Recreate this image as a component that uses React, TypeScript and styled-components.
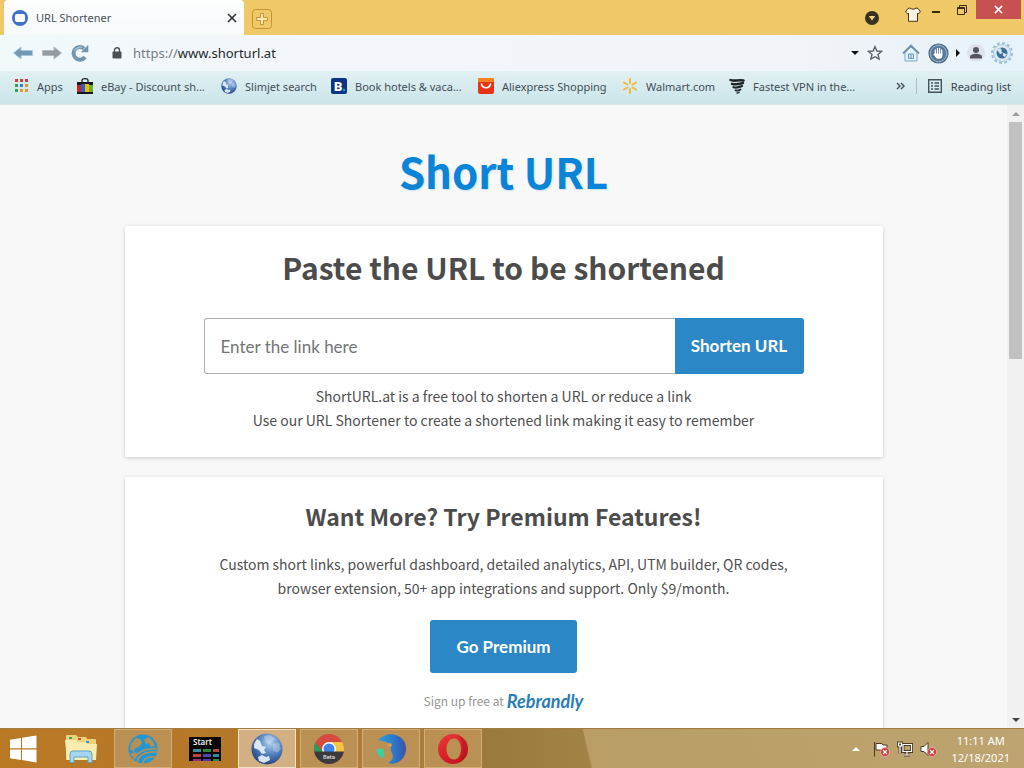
import React from "react";
import styled, { createGlobalStyle } from "styled-components";

const uiFont = '"Noto Sans", "Open Sans", sans-serif';
const bodyFont = '"Noto Sans CJK SC", "Open Sans", sans-serif';
const buttonFont = 'Lato, "Open Sans", sans-serif';

const GlobalStyle = createGlobalStyle`
  * { box-sizing: border-box; }
  html, body, #root { height: 100%; }
  body { margin: 0; overflow: hidden; font-family: ${uiFont}; font-size: 11px; color: #3c4650; }
  button { border: 0; padding: 0; background: none; font: inherit; color: inherit; cursor: pointer; }
  svg { display: block; flex: none; }
  h1, h2, p { margin: 0; }
`;

const Desktop = styled.div`
  display: flex;
  flex-direction: column;
  height: 100vh;
`;

/* ---------- browser chrome ---------- */

const TabStrip = styled.header`
  display: flex;
  flex: none;
  height: 35px;
  padding-left: 4px;
  background: #efc867;
`;

const Tab = styled.div`
  display: flex;
  align-items: center;
  gap: 8px;
  width: 240px;
  padding: 0 6px 0 8px;
  background: linear-gradient(#fdfefe, #f6fafb);
  border-radius: 4px 4px 0 0;
`;

const TabTitle = styled.span`
  flex: 1;
  color: #4b5055;
`;

const IconButton = styled.button`
  display: flex;
  align-items: center;
  justify-content: center;
  flex: none;
`;

const TabClose = styled(IconButton)`
  width: 12px;
  height: 16px;
`;

const NewTabButton = styled(IconButton)`
  width: 20px;
  height: 20px;
  margin: 9px 0 0 8px;
`;

const WindowControls = styled.div`
  display: flex;
  align-items: flex-start;
  margin-left: auto;
`;

const WindowButton = styled(IconButton)<{ $width: number; $height: number }>`
  width: ${(p) => p.$width}px;
  height: ${(p) => p.$height}px;
`;

const CloseWindow = styled(WindowButton)`
  background: #c75050;
  margin-right: 3px;
`;

const Toolbar = styled.div`
  display: flex;
  align-items: center;
  flex: none;
  height: 36px;
  padding: 0 10px 0 13px;
  background: linear-gradient(90deg, #f1f9fb, #f3f6fa 30%, #f0f3f7 80%, #e6f3fa);
`;

const NavButtons = styled.nav`
  display: flex;
  align-items: center;
  gap: 9px;
  margin-right: 23px;
`;

const AddressField = styled.label`
  display: flex;
  align-items: center;
  flex: 1;
  font-size: 13px;
  color: #777b80;
`;

const Scheme = styled.span`
  margin-left: 11px;
`;

const AddressInput = styled.input`
  flex: 1;
  min-width: 0;
  padding: 0;
  border: 0;
  outline: 0;
  background: transparent;
  font: inherit;
  color: #25282c;
`;

const ToolbarActions = styled.div`
  display: flex;
  align-items: center;
  gap: 8px;
`;

const HomeButton = styled(IconButton)`
  margin-left: 11px;
`;

const Extensions = styled.div`
  display: flex;
  align-items: center;
  gap: 5px;
`;

const BookmarkBar = styled.nav`
  display: flex;
  align-items: center;
  flex: none;
  height: 34px;
  padding: 0 13px 3px 13px;
  background: linear-gradient(#e2f0f3, #c9e5e9);
  border-bottom: 1px solid #dfe6e7;
`;

const BookmarkLink = styled.a<{ $width: number }>`
  display: flex;
  align-items: center;
  gap: 8px;
  flex: none;
  width: ${(p) => p.$width}px;
  color: #434d56;
  text-decoration: none;
  white-space: nowrap;
`;

const BookmarkEnd = styled.div`
  display: flex;
  align-items: center;
  gap: 11px;
  margin-left: auto;
`;

const Divider = styled.span`
  width: 1px;
  height: 16px;
  background: #a9bcc2;
`;

const ReadingList = styled.button`
  display: flex;
  align-items: center;
  gap: 9px;
  color: #38424b;
`;

/* ---------- page ---------- */

const Viewport = styled.div`
  display: flex;
  flex: 1;
  min-height: 0;
`;

const Page = styled.main`
  display: flex;
  flex-direction: column;
  align-items: center;
  flex: 1;
  overflow: hidden;
  padding: 31px 24px 0;
  background: #f8f8f8;
  font-family: ${bodyFont};
  font-size: 14px;
  line-height: 24px;
  color: #505050;
  text-align: center;
`;

const SiteTitle = styled.h1`
  font-size: 42px;
  line-height: 70px;
  color: #0a84d6;
  text-shadow: 1px 1px 2px #c9dfee;
`;

const Card = styled.section`
  display: flex;
  flex-direction: column;
  align-items: center;
  flex: none;
  width: 100%;
  max-width: 758px;
  margin-top: 20px;
  padding: 16px 24px 25px;
  background: #fff;
  border-radius: 2px;
  box-shadow: 0 1px 4px #cccccc;
`;

const CardTitle = styled.h2<{ $size: number; $line: number }>`
  font-size: ${(p) => p.$size}px;
  line-height: ${(p) => p.$line}px;
  color: #4c4c4c;
`;

const ShortenForm = styled.form`
  display: flex;
  width: 100%;
  max-width: 600px;
  height: 56px;
  margin: 26px 0 10px;
`;

const LinkInput = styled.input`
  flex: 1;
  min-width: 0;
  padding: 0 16px;
  border: 1px solid #b0b0b0;
  border-right: 0;
  border-radius: 3px 0 0 3px;
  outline: 0;
  font-family: ${buttonFont};
  font-size: 17px;
  &::placeholder { color: #757575; }
`;

const PrimaryButton = styled.button`
  background: #2b87c5;
  color: #fff;
  font-family: ${buttonFont};
  font-size: 17px;
  font-weight: 700;
`;

const ShortenButton = styled(PrimaryButton)`
  width: 129px;
  border-radius: 0 3px 3px 0;
`;

const PremiumButton = styled(PrimaryButton)`
  width: 147px;
  height: 53px;
  margin: 20px 0 16px;
  border-radius: 3px;
`;

const Pitch = styled.p`
  max-width: 600px;
  margin-top: 13px;
`;

const SignUp = styled.p`
  display: flex;
  align-items: center;
  gap: 3px;
  font-size: 12px;
  color: #959595;
`;

const Brand = styled.a`
  color: #2a7db5;
  font-family: ${buttonFont};
  font-size: 18px;
  font-style: italic;
  font-weight: 700;
  text-decoration: none;
`;

const ScrollTrack = styled.div`
  display: flex;
  flex-direction: column;
  align-items: center;
  flex: none;
  width: 17px;
  background: #f1f1f1;
`;

const ScrollArrow = styled(IconButton)`
  width: 17px;
  height: 17px;
`;

const ScrollThumb = styled.div`
  width: 13px;
  height: 38%;
  margin-bottom: auto;
  background: #c1c1c1;
`;

/* ---------- taskbar ---------- */

const Taskbar = styled.footer`
  display: flex;
  align-items: stretch;
  flex: none;
  height: 40px;
  border-top: 1px solid #a07c43;
  background:
    linear-gradient(77deg, transparent 9px, #b99d65 10px, #bda470) 100% 0 / calc(100% - 582px) 100% no-repeat,
    linear-gradient(90deg, #b97823 0, #b5782a 240px, #ad7f3f 400px, #a87432 475px, #9a7a3c 480px, #a08345 590px);
`;

const TaskButton = styled.button<{ $state?: "open" | "active" }>`
  display: flex;
  align-items: center;
  justify-content: center;
  width: 58px;
  margin: 0 2px;
  border: 1px solid ${(p) => (p.$state === "active" ? "#f2e3c6" : p.$state ? "#d3ad74" : "transparent")};
  background: ${(p) => (p.$state === "active" ? "#d2b083" : p.$state ? "#bb9054" : "transparent")};
`;

const StartButton = styled(TaskButton)`
  width: 46px;
  margin: 0 4px 0 0;
`;

const Tray = styled.div`
  display: flex;
  align-items: center;
  gap: 7px;
  margin-left: auto;
  padding-right: 14px;
`;

const TrayToggle = styled(IconButton)`
  margin-right: 6px;
`;

const Clock = styled.time`
  display: block;
  margin-left: 7px;
  line-height: 17px;
  color: #fff;
  text-align: center;
`;

/* ---------- icons ---------- */

const Favicon = () => (
  <svg width="16" height="16" viewBox="0 0 16 16">
    <circle cx="8" cy="8" r="8" fill="#4272c8" />
    <rect x="3" y="4" width="10" height="8" rx="2" fill="#fff" />
  </svg>
);

const Cross = ({ color, size = 10 }: { color: string; size?: number }) => (
  <svg width={size} height={size} viewBox="0 0 10 10" stroke={color} strokeWidth="1.7">
    <path d="M1 1l8 8M9 1L1 9" />
  </svg>
);

const PlusBox = () => (
  <svg width="20" height="20" viewBox="0 0 20 20" fill="none" stroke="#c69034">
    <rect x=".5" y=".5" width="19" height="19" rx="3" />
    <path d="M8.500 4.500h3v4h4v3h-4v4h-3v-4h-4v-3h4z" fill="#fbe9b8" />
  </svg>
);

const MenuDot = () => (
  <svg width="14" height="14" viewBox="0 0 14 14">
    <circle cx="7" cy="7" r="7" fill="#39301d" />
    <path d="M3.800 5h6.400L7 9.500z" fill="#f5d78c" />
  </svg>
);

const Shirt = () => (
  <svg width="16" height="15" viewBox="0 0 16 15">
    <path d="M5 1c1 1.500 5 1.500 6 0l2 .4L15.500 5l-2.300 1.800L12.500 6v8.300h-9V6l-.7.8L.5 5 3 1.400z" fill="#fff3e4" stroke="#4b3515" />
  </svg>
);

const Minimize = () => (
  <svg width="8" height="2" viewBox="0 0 8 2">
    <path d="M0 1h8" stroke="#3a2a0c" strokeWidth="2" />
  </svg>
);

const Restore = () => (
  <svg width="10" height="10" viewBox="0 0 10 10" fill="none" stroke="#3a2a0c">
    <path d="M2.500 2V.5h7v7H8" />
    <path d="M.5 2.500h7v7h-7zM0 3.500h8" />
  </svg>
);

const Arrow = ({ forward = false }: { forward?: boolean }) => (
  <svg width="20" height="14" viewBox="0 0 20 14">
    <path
      d={forward ? "M19.500 7L12 1v3.500H.6v5H12V13z" : "M.5 7L8 1v3.500h11.400v5H8V13z"}
      fill={forward ? "#929ca1" : "#7298b4"}
      stroke={forward ? "#b3babd" : "#a9c6d9"}
    />
  </svg>
);

const Reload = () => (
  <svg width="18" height="18" viewBox="0 0 18 18" fill="none">
    <path d="M14 13A6.300 6.300 0 1 1 13 4.600" stroke="#7595ad" strokeWidth="4" />
    <path d="M17.300.8v7.400H9.800z" fill="#7595ad" />
    <path d="M3.500 7A6 6 0 0 1 11 3.600" stroke="#a7c0d2" strokeWidth="1.500" />
  </svg>
);

const Lock = () => (
  <svg width="10" height="12" viewBox="0 0 10 12">
    <path d="M2.500 5V3.300a2.500 2.500 0 0 1 5 0V5" fill="none" stroke="#4d4f52" strokeWidth="1.400" />
    <rect x=".5" y="4.500" width="9" height="7" rx="1" fill="#4d4f52" />
  </svg>
);

const Triangle = ({ dir, color = "#111" }: { dir: "up" | "down" | "right"; color?: string }) => (
  <svg width="8" height="8" viewBox="0 0 8 8" fill={color}>
    <path d={dir === "up" ? "M4 2l4 4H0z" : dir === "down" ? "M0 2h8L4 6z" : "M2 0l4 4-4 4z"} />
  </svg>
);

const Star = () => (
  <svg width="16" height="16" viewBox="0 0 16 16" fill="none" stroke="#5b6067" strokeWidth="1.400">
    <path d="M8 1.700l1.900 4.300 4.600.4-3.500 3.100 1.100 4.600L8 11.700l-4.100 2.400L5 9.500 1.500 6.400l4.600-.4z" />
  </svg>
);

const Home = () => (
  <svg width="18" height="18" viewBox="0 0 18 18">
    <path d="M3 8.500L9 3l6 5.500V17H3z" fill="#e6f2fa" stroke="#7ba7c8" />
    <path d="M1 9.500l8-8 8 8" fill="none" stroke="#6f8fa8" strokeWidth="1.800" />
    <path d="M6.500 10h5v4.500h-5zM9 10v4.500" fill="#d3e3f0" stroke="#6c98be" />
  </svg>
);

const HandStop = () => (
  <svg width="21" height="21" viewBox="0 0 21 21">
    <circle cx="10.500" cy="10.500" r="9.500" fill="#58789a" stroke="#4c6a88" strokeWidth="1.200" />
    <circle cx="10.500" cy="10.500" r="8.200" fill="none" stroke="#a4bad0" />
    <path d="M7.300 7v4.500M9.500 5.500v6M11.600 5.500v6M13.700 7v5" stroke="#fff" strokeWidth="1.300" strokeLinecap="round" />
    <path d="M6.700 10.500h7.600V13c0 1.700-1.300 2.800-3 2.800H10c-1.300 0-2-.6-2.700-1.800l-2-2.800.9-.5z" fill="#fff" />
  </svg>
);

const Person = () => (
  <svg width="18" height="18" viewBox="0 0 18 18">
    <circle cx="9" cy="9" r="9" fill="#dfe2ec" />
    <circle cx="9" cy="6" r="3" fill="#53545f" />
    <path d="M3 14.500V13c0-2 3-3.200 6-3.200s6 1.200 6 3.200v1.500z" fill="#53545f" />
  </svg>
);

const GearGlobe = () => (
  <svg width="24" height="24" viewBox="0 0 24 24">
    <circle cx="12" cy="12" r="10" fill="#edf5fa" stroke="#9fbfd5" strokeWidth="2" strokeDasharray="3 2.200" />
    <circle cx="12" cy="12" r="8.500" fill="#dceaf4" stroke="#a7c5da" />
    <circle cx="12" cy="12" r="5.500" fill="#3f6d99" />
    <path d="M7 9l3-2 2 2-1 1 2 2-3 1zM13 12l4 1-2 3-2-1z" fill="#d4e6f2" />
  </svg>
);

const gridColors = ["#cf3f3f", "#cf3f3f", "#cf3f3f", "#3c9b55", "#4079c8", "#d99a2e", "#3c9b55", "#d99a2e", "#d99a2e"];

const AppsGrid = () => (
  <svg width="16" height="16" viewBox="0 0 16 16">
    {gridColors.map((fill, i) => (
      <rect key={i} x={2 + (i % 3) * 5} y={1 + Math.floor(i / 3) * 5} width="3" height="3" fill={fill} />
    ))}
  </svg>
);

const EbayBag = () => (
  <svg width="16" height="16" viewBox="0 0 16 16">
    <path d="M5 5V2.500C5 0 11 0 11 2.500V5" fill="none" stroke="#222" strokeWidth="1.300" />
    <path d="M0 4h16v3H0z" fill="#15181c" />
    <path d="M0 7h4v7H0z" fill="#d0202b" />
    <path d="M4 6h4v8H4z" fill="#2464c4" />
    <path d="M8 6h4v8H8z" fill="#f1b90c" />
    <path d="M12 7h4v7h-4z" fill="#6fae21" />
    <path d="M0 14h16v2H0z" fill="#15181c" />
  </svg>
);

const Globe = ({ size }: { size: number }) => (
  <svg width={size} height={size} viewBox="0 0 32 32">
    <defs>
      <radialGradient id="sea" cx=".6" cy=".3" r=".75">
        <stop offset="0" stopColor="#b4d0ee" />
        <stop offset=".5" stopColor="#5583bd" />
        <stop offset="1" stopColor="#1f3f78" />
      </radialGradient>
    </defs>
    <circle cx="16" cy="16" r="15.500" fill="url(#sea)" />
    <path d="M3 11l3-5 3 2 2 5 4 1-2 3 2 3-4 1-3-4-5-2zM7 24l4-2 4 2 3-1 1 4-6 3-5-2z" fill="#e9f3fc" opacity=".9" />
    <path d="M13 3l6-1 6 4-4 2-3 4-4-3zM22 11l6-1 2 6-4 4-4-3z" fill="#d7e7f7" opacity=".35" />
  </svg>
);

const BookingIcon = () => (
  <svg width="16" height="16" viewBox="0 0 16 16">
    <rect width="16" height="16" rx="2" fill="#0b3580" />
    <text x="3" y="13" fill="#fff" fontFamily="Roboto, sans-serif" fontWeight="900" fontSize="13">B</text>
    <circle cx="13" cy="12" r="1.200" fill="#20a0e4" />
  </svg>
);

const AliIcon = () => (
  <svg width="16" height="16" viewBox="0 0 16 16">
    <rect width="16" height="16" rx="2" fill="#e43316" />
    <path d="M0 4V2a2 2 0 0 1 2-2h12a2 2 0 0 1 2 2v2z" fill="#f5821f" />
    <path d="M3.500 6c1 5 8 5 9 0" fill="none" stroke="#fff" strokeWidth="1.600" strokeLinecap="round" />
  </svg>
);

const WalmartIcon = () => (
  <svg width="16" height="16" viewBox="0 0 16 16" stroke="#f2b83a" strokeWidth="2" strokeLinecap="round">
    <path d="M8 1v4M8 11v4M2 4.500l3.500 2M10.500 9.500l3.500 2M2 11.500l3.500-2M10.500 6.500l3.500-2" />
  </svg>
);

const VpnIcon = () => (
  <svg width="16" height="16" viewBox="0 0 16 16" fill="none" stroke="#20262a" strokeLinecap="round">
    <path d="M1.500 2c3 1.800 8-.6 13 .5" strokeWidth="2.600" />
    <path d="M3 5.800c4 1.400 8 0 11-.8" strokeWidth="2.400" />
    <path d="M4.500 9.200c3 1 6 0 8.500-1.200" strokeWidth="2.200" />
    <path d="M6.500 12.400c2 .5 3.500 0 5-1" strokeWidth="1.800" />
    <path d="M8 15c1 0 1.500-.3 2.200-.8" strokeWidth="1.300" />
  </svg>
);

const DoubleChevron = () => (
  <svg width="9" height="8" viewBox="0 0 9 8" fill="none" stroke="#3f4a52" strokeWidth="1.400">
    <path d="M1 1l3 3-3 3M5 1l3 3-3 3" />
  </svg>
);

const ListIcon = () => (
  <svg width="14" height="14" viewBox="0 0 14 14" fill="none" stroke="#46525b" strokeWidth="1.400">
    <path d="M.7.7h12.600v12.600H.7zM3 4h2M6.500 4H11M3 7h2M6.500 7H11M3 10h2M6.500 10H11" />
  </svg>
);

const WindowsLogo = () => (
  <svg width="28" height="28" viewBox="0 0 28 28" fill="#fff">
    <path d="M1 4.700l11-1.800v10.400H1zM13 2.700L27.500.5v12.800H13zM1 14.500h11v10.400L1 23.300zM13 14.500h14.500v12.900L13 25.100z" />
  </svg>
);

const FolderIcon = () => (
  <svg width="32" height="30" viewBox="0 0 32 30">
    <path d="M1 2q0-1 1-1h9l2 2h8l1 2h8q1 0 1 1v20H1z" fill="#ecd27c" />
    <path d="M4 3h3v2H4z" fill="#3f9a57" />
    <path d="M13 4h3v2h-3z" fill="#c9552b" />
    <path d="M21 7h3v2h-3z" fill="#3c8dc9" />
    <path d="M0 6h11l2 2h8l1 2h10l-1 16H2z" fill="#faedb0" />
    <path d="M5 28.500V20q0-3 3-3h16q3 0 3 3v8.500h-4V23H9v5.500z" fill="#a5d6ee" stroke="#5aa4ca" />
  </svg>
);

const BlueGlobe = () => (
  <svg width="30" height="30" viewBox="0 0 30 30">
    <circle cx="15" cy="15" r="14.500" fill="#2497d2" />
    <path d="M3 10l5-6 4 1 2 4-3 4-4 1-1 4-4-3zM16 6l4-3 5 4 2 5-4 1-2-4-3 1zM2 20l5-2 3 3-3 4z" fill="#b59055" />
    <path d="M9 29c0-7 8-12 20-11M14 30c2-6 6-8 13-7M5 26C9 18 17 14 29 15" fill="none" stroke="#b59055" strokeWidth="1.500" />
  </svg>
);

const tileColors = ["#3b8a9b", "#2d8a38", "#b8433b", "#b8433b", "#4a4aa8", "#2f8d9b", "#9b2a8a", "#5a3aa0", "#2d8a38"];

const StartTiles = () => (
  <svg width="32" height="24" viewBox="0 0 32 24">
    <rect width="32" height="24" fill="#080808" />
    <text x="4" y="8" fill="#fff" fontFamily="Open Sans, sans-serif" fontWeight="600" fontSize="8">Start</text>
    {tileColors.map((fill, i) => (
      <rect key={i} x={4 + (i % 3) * 10} y={12 + Math.floor(i / 3) * 5} width={i % 3 === 2 ? 6 : 8} height="3" fill={fill} />
    ))}
  </svg>
);

const ChromeBeta = () => (
  <svg width="30" height="30" viewBox="0 0 30 30">
    <defs>
      <clipPath id="disc"><circle cx="15" cy="15" r="15" /></clipPath>
    </defs>
    <g clipPath="url(#disc)">
      <path d="M0 0h30v30H0z" fill="#d64b3f" />
      <path d="M0 7l9 11H0z" fill="#2d9b57" />
      <path d="M16 8h14v10H16z" fill="#f6c445" />
      <circle cx="15" cy="15" r="7" fill="#fff" />
      <circle cx="15" cy="15" r="5.500" fill="#3f83ec" />
      <path d="M0 17.500h30V30H0z" fill="#3b3b3d" />
    </g>
    <text x="15" y="25" fill="#eee" fontFamily="Roboto, sans-serif" fontSize="6" textAnchor="middle">Beta</text>
  </svg>
);

const BlueSwirl = () => (
  <svg width="30" height="30" viewBox="0 0 30 30">
    <defs>
      <linearGradient id="swirl">
        <stop offset="0" stopColor="#27a0de" />
        <stop offset=".5" stopColor="#2b7fcc" />
        <stop offset="1" stopColor="#3b4fb0" />
      </linearGradient>
    </defs>
    <path d="M2 6C8 0 16-1 22 2c9 4 10 15 5 22-4 5-10 7-15 5 3-2 5-4 5-7-1-4-3-5-2-8 0-3-2-5-5-6-3-1-5-1-8-2z" fill="url(#swirl)" />
    <path d="M11 10l4-1 1 3-3 1z" fill="#e09a5b" />
    <path d="M0 16c2-1 5-2 7-1 2 3 1 6 0 9-4-1-6-4-7-8z" fill="#3fd09a" />
  </svg>
);

const OperaIcon = () => (
  <svg width="30" height="30" viewBox="0 0 30 30" fillRule="evenodd">
    <defs>
      <linearGradient id="opera" x2=".6" y2="1">
        <stop offset="0" stopColor="#ee3a3a" />
        <stop offset="1" stopColor="#c8141e" />
      </linearGradient>
    </defs>
    <path d="M15 0a15 15 0 1 1 0 30a15 15 0 1 1 0-30zM16 4.500c-4.500 0-7.500 5-7.500 10.500s3 10.500 7.500 10.500S23 20.500 23 15 20.500 4.500 16 4.500z" fill="url(#opera)" />
    <path d="M20 1q10 4 10 14t-10 14q5-5 5-14T20 1z" fill="#a8121b" opacity=".4" />
  </svg>
);

const ErrorBadge = () => (
  <g>
    <circle cx="12" cy="11" r="4.500" fill="#cf3a38" stroke="#f4d5cf" strokeWidth=".6" />
    <path d="M10 9l4 4M14 9l-4 4" stroke="#fff" strokeWidth="1.300" />
  </g>
);

const FlagIcon = () => (
  <svg width="17" height="16" viewBox="0 0 17 16">
    <path d="M1.500 1v14.500M3 2.500h6l1 1.500h4v6H9L8 9H3z" fill="#fff" stroke="#4f3b22" />
    <ErrorBadge />
  </svg>
);

const NetworkIcon = () => (
  <svg width="16" height="16" viewBox="0 0 16 16" fill="none">
    <g stroke="#4f3b22" strokeWidth="3">
      <path d="M6 3.500h8.500v7H6zM7 14h6M10 11v3M1.500 2h3v3h-3zM3 5v7.500" />
    </g>
    <g stroke="#fff" strokeWidth="1.200">
      <path d="M6 3.500h8.500v7H6zM7 14h6M10 11v3M1.500 2h3v3h-3zM3 5v7.500" />
    </g>
  </svg>
);

const SpeakerIcon = () => (
  <svg width="17" height="16" viewBox="0 0 17 16">
    <path d="M1 5.500h3l4-4v13l-4-4H1z" fill="#fff" stroke="#4f3b22" />
    <ErrorBadge />
  </svg>
);

const bookmarks = [
  { label: "Apps", width: 64, icon: <AppsGrid /> },
  { label: "eBay - Discount sh...", width: 144, icon: <EbayBag /> },
  { label: "Slimjet search", width: 110, icon: <Globe size={16} /> },
  { label: "Book hotels & vaca...", width: 147, icon: <BookingIcon /> },
  { label: "Aliexpress Shopping", width: 144, icon: <AliIcon /> },
  { label: "Walmart.com", width: 107, icon: <WalmartIcon /> },
  { label: "Fastest VPN in the...", width: 130, icon: <VpnIcon /> },
];

export default function App() {
  return (
    <Desktop>
      <GlobalStyle />
      <TabStrip>
        <Tab>
          <Favicon />
          <TabTitle>URL Shortener</TabTitle>
          <TabClose aria-label="Close tab"><Cross color="#333" /></TabClose>
        </Tab>
        <NewTabButton aria-label="New tab"><PlusBox /></NewTabButton>
        <WindowControls>
          <WindowButton $width={60} $height={35} aria-label="Tab menu"><MenuDot /></WindowButton>
          <WindowButton $width={22} $height={28} aria-label="Themes"><Shirt /></WindowButton>
          <WindowButton $width={24} $height={24} aria-label="Minimize"><Minimize /></WindowButton>
          <WindowButton $width={28} $height={19} aria-label="Restore"><Restore /></WindowButton>
          <CloseWindow $width={45} $height={19} aria-label="Close window"><Cross color="#fff" size={9} /></CloseWindow>
        </WindowControls>
      </TabStrip>

      <Toolbar>
        <NavButtons>
          <IconButton aria-label="Back"><Arrow /></IconButton>
          <IconButton aria-label="Forward"><Arrow forward /></IconButton>
          <IconButton aria-label="Reload"><Reload /></IconButton>
        </NavButtons>
        <AddressField>
          <Lock />
          <Scheme>https://</Scheme>
          <AddressInput aria-label="Address" defaultValue="www.shorturl.at" />
        </AddressField>
        <ToolbarActions>
          <IconButton aria-label="History"><Triangle dir="down" /></IconButton>
          <IconButton aria-label="Bookmark this page"><Star /></IconButton>
          <HomeButton aria-label="Home"><Home /></HomeButton>
          <Extensions>
            <IconButton aria-label="Ad blocker"><HandStop /></IconButton>
            <IconButton aria-label="More extensions"><Triangle dir="right" /></IconButton>
            <IconButton aria-label="Profile"><Person /></IconButton>
            <IconButton aria-label="Settings"><GearGlobe /></IconButton>
          </Extensions>
        </ToolbarActions>
      </Toolbar>

      <BookmarkBar>
        {bookmarks.map((b) => (
          <BookmarkLink key={b.label} href="#" $width={b.width}>
            {b.icon}
            {b.label}
          </BookmarkLink>
        ))}
        <BookmarkEnd>
          <IconButton aria-label="More bookmarks"><DoubleChevron /></IconButton>
          <Divider />
          <ReadingList><ListIcon />Reading list</ReadingList>
        </BookmarkEnd>
      </BookmarkBar>

      <Viewport>
        <Page>
          <SiteTitle>Short URL</SiteTitle>
          <Card>
            <CardTitle $size={30} $line={50}>Paste the URL to be shortened</CardTitle>
            <ShortenForm onSubmit={(e) => e.preventDefault()}>
              <LinkInput aria-label="Link" placeholder="Enter the link here" />
              <ShortenButton type="submit">Shorten URL</ShortenButton>
            </ShortenForm>
            <p>ShortURL.at is a free tool to shorten a URL or reduce a link</p>
            <p>Use our URL Shortener to create a shortened link making it easy to remember</p>
          </Card>
          <Card>
            <CardTitle $size={23} $line={46}>Want More? Try Premium Features!</CardTitle>
            <Pitch>
              Custom short links, powerful dashboard, detailed analytics, API, UTM builder, QR codes,
              browser extension, 50+ app integrations and support. Only $9/month.
            </Pitch>
            <PremiumButton>Go Premium</PremiumButton>
            <SignUp>Sign up free at <Brand href="#">Rebrandly</Brand></SignUp>
          </Card>
        </Page>
        <ScrollTrack>
          <ScrollArrow aria-label="Scroll up"><Triangle dir="up" color="#9a9a9a" /></ScrollArrow>
          <ScrollThumb />
          <ScrollArrow aria-label="Scroll down"><Triangle dir="down" color="#444" /></ScrollArrow>
        </ScrollTrack>
      </Viewport>

      <Taskbar>
        <StartButton aria-label="Start"><WindowsLogo /></StartButton>
        <TaskButton aria-label="File Explorer"><FolderIcon /></TaskButton>
        <TaskButton $state="open" aria-label="Web browser"><BlueGlobe /></TaskButton>
        <TaskButton aria-label="Start menu"><StartTiles /></TaskButton>
        <TaskButton $state="active" aria-label="Slimjet"><Globe size={32} /></TaskButton>
        <TaskButton $state="open" aria-label="Chrome Beta"><ChromeBeta /></TaskButton>
        <TaskButton $state="open" aria-label="Swirl browser"><BlueSwirl /></TaskButton>
        <TaskButton $state="open" aria-label="Opera"><OperaIcon /></TaskButton>
        <Tray>
          <TrayToggle aria-label="Show hidden icons"><Triangle dir="up" color="#fff" /></TrayToggle>
          <FlagIcon />
          <NetworkIcon />
          <SpeakerIcon />
          <Clock>11:11 AM<br />12/18/2021</Clock>
        </Tray>
      </Taskbar>
    </Desktop>
  );
}
